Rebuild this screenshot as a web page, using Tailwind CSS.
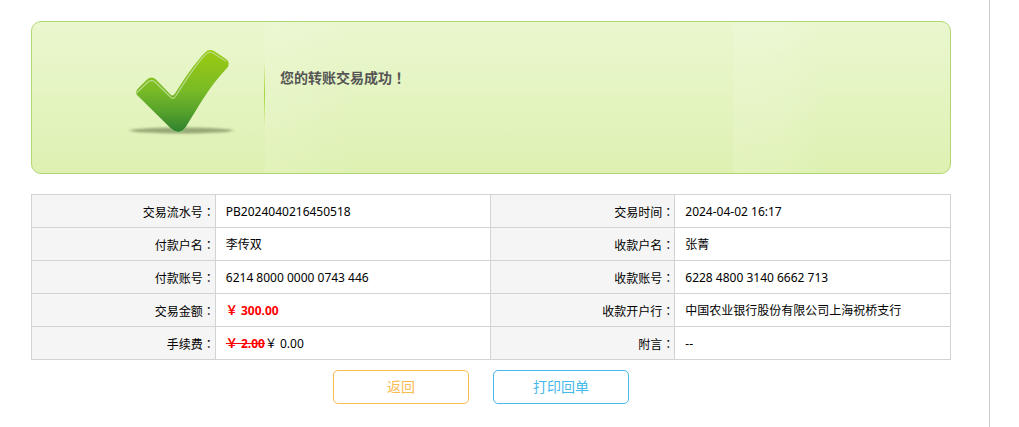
<!DOCTYPE html>
<html lang="zh-CN">
<head>
  <meta charset="UTF-8" />
  <meta name="viewport" content="width=device-width, initial-scale=1.0" />
  <title>转账结果</title>
  <script src="https://cdn.jsdelivr.net/npm/@tailwindcss/browser@4"></script>
</head>
<body class="bg-white pr-[29px] font-['Noto_Sans','Noto_Sans_CJK_SC',sans-serif] text-xs text-black">

  <main class="min-h-screen border-r border-[#ccc] pt-[21px] pr-[38px] pl-[31px]">

    <!-- 交易结果 -->
    <section class="relative flex h-[153px] overflow-hidden rounded-[10px] border border-[#b1d772] bg-gradient-to-b from-[#eaf7cf] to-[#def1b2]">
      <div class="absolute inset-y-0 left-[25.4%] w-[10%] bg-gradient-to-r from-white/10 to-white/0"></div>
      <div class="absolute inset-y-0 left-[76.4%] w-[10%] bg-gradient-to-r from-white/12 via-white/10 to-white/0"></div>

      <svg class="relative mt-5 ml-[90px] h-[100px] w-[120px] shrink-0" viewBox="0 0 120 100" aria-hidden="true">
        <defs>
          <linearGradient id="tick" x1="0" y1="0" x2="0" y2="1">
            <stop offset="0" stop-color="#9ccb10" />
            <stop offset="0.48" stop-color="#7abb25" />
            <stop offset="0.75" stop-color="#56a22c" />
            <stop offset="1" stop-color="#2f802f" />
          </linearGradient>
          <filter id="soft" x="-10%" y="-100%" width="120%" height="300%">
            <feGaussianBlur stdDeviation="2 1" />
          </filter>
        </defs>
        <ellipse cx="59.500" cy="88.500" rx="51" ry="3" fill="#7f9160" opacity="0.75" filter="url(#soft)" />
        <path d="M15.500 47 L25 37.500 Q29.500 33.500 34 37.500 L48.500 52.500 Q51 55 53 51.500 C64 34 73 21 83 10.500 Q87 6.500 92 9 L104 17 Q109 21 105 26 C86 46 77 64 63.500 85.500 Q58 93.500 50.500 88 L16 54 Q12.500 51 15.500 47 Z" fill="url(#tick)" />
        <path d="M15 50.500 L26 40 Q29.500 37 33 40 L49 55.500 Q51.500 57.500 53.500 54.500 C65 36 75 21 84 12 Q87.500 9 91 11 L103.500 19" fill="none" stroke="#b5da83" stroke-width="1.3" stroke-linecap="round" />
        <path d="M48.500 86.500 Q57 94.500 64 85.500" fill="none" stroke="#a5ce86" stroke-width="0.8" />
      </svg>

      <div class="relative mt-10 ml-[22px] h-16 w-px bg-gradient-to-b from-[#a8d436]/0 via-[#a8d436] to-[#a8d436]/0"></div>
      <h1 class="relative mt-[45px] ml-[15px] text-sm leading-5 font-bold text-[#555]">您的转账交易成功<span lang="zh-TW" class="font-['Noto_Sans_CJK_TC',sans-serif]">！</span></h1>
    </section>

    <!-- 交易明细 -->
    <table class="mt-5 w-full table-fixed border-collapse leading-4 [&_td]:border [&_td]:border-[#d3d3d3] [&_td]:px-2.5 [&_td]:pt-0.5 [&_th]:border [&_th]:border-[#d3d3d3] [&_th]:bg-[#f5f5f5] [&_th]:pt-0.5 [&_th]:text-right [&_th]:font-normal [&_th_span]:font-['Noto_Sans_CJK_TC',sans-serif] [&_tr]:h-[33px]">
      <colgroup>
        <col class="w-[20%]" />
        <col class="w-[30%]" />
        <col class="w-[20%]" />
        <col class="w-[30%]" />
      </colgroup>
      <tbody>
        <tr>
          <th scope="row">交易流水号<span lang="zh-TW">：</span></th>
          <td>PB2024040216450518</td>
          <th scope="row">交易时间<span lang="zh-TW">：</span></th>
          <td>2024-04-02 16:17</td>
        </tr>
        <tr>
          <th scope="row">付款户名<span lang="zh-TW">：</span></th>
          <td>李传双</td>
          <th scope="row">收款户名<span lang="zh-TW">：</span></th>
          <td>张菁</td>
        </tr>
        <tr>
          <th scope="row">付款账号<span lang="zh-TW">：</span></th>
          <td>6214 8000 0000 0743 446</td>
          <th scope="row">收款账号<span lang="zh-TW">：</span></th>
          <td>6228 4800 3140 6662 713</td>
        </tr>
        <tr>
          <th scope="row">交易金额<span lang="zh-TW">：</span></th>
          <td><b class="font-bold text-[#f00]">￥ 300.00</b></td>
          <th scope="row">收款开户行<span lang="zh-TW">：</span></th>
          <td>中国农业银行股份有限公司上海祝桥支行</td>
        </tr>
        <tr>
          <th scope="row">手续费<span lang="zh-TW">：</span></th>
          <td><del class="font-bold text-[#f00] line-through">￥ 2.00</del>￥ 0.00</td>
          <th scope="row">附言<span lang="zh-TW">：</span></th>
          <td>--</td>
        </tr>
      </tbody>
    </table>

    <div class="mt-2.5 flex justify-center gap-6 pr-5">
      <button type="button" class="h-[34px] w-[136px] cursor-pointer rounded-[5px] border border-[#fabb50] bg-white text-sm text-[#fabb50]">返回</button>
      <button type="button" class="h-[34px] w-[136px] cursor-pointer rounded-[5px] border border-[#45b9e9] bg-white text-sm text-[#45b9e9]">打印回单</button>
    </div>
  </main>

</body>
</html>
